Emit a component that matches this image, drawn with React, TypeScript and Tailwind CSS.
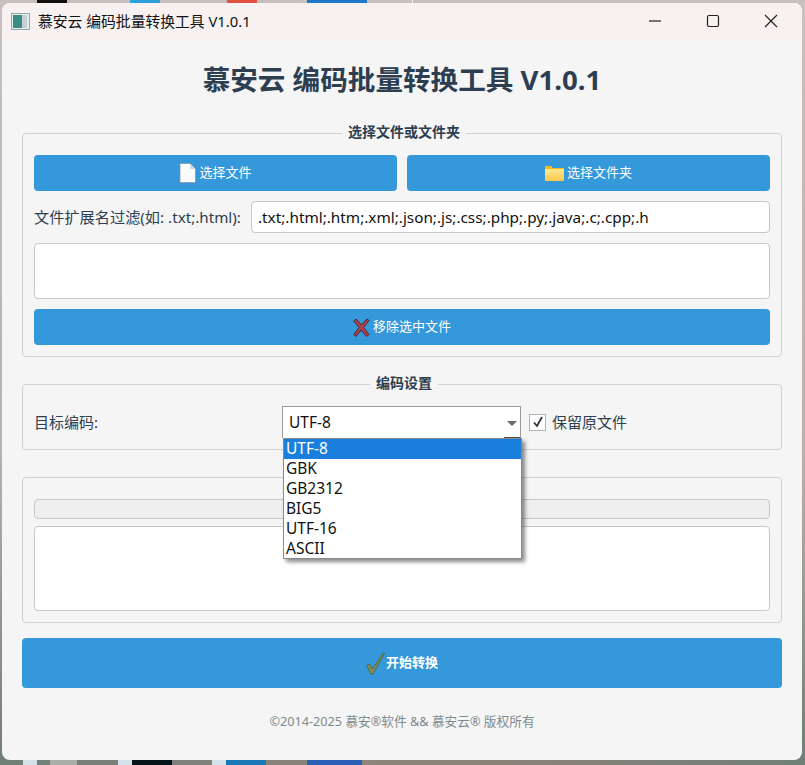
import { ReactNode } from 'react';

const cjk = "font-['Noto_Sans','Noto_Sans_CJK_SC',sans-serif]";

function FileIcon() {
  return (
    <svg width="17" height="20" viewBox="0 0 17 20" className="shrink-0">
      <path d="M1 .5h10l5.500 5.500v13.500H1z" fill="#fbfbfb" stroke="#8a9098" strokeWidth=".7" />
      <path d="M11 .5v5.500h5.500z" fill="#d5d8dc" />
    </svg>
  );
}

function FolderIcon() {
  return (
    <svg width="19" height="15" viewBox="0 0 19 15" className="shrink-0">
      <defs>
        <linearGradient id="folderFill" x1="0" y1="0" x2="0" y2="1">
          <stop offset="0" stopColor="#ffe88f" />
          <stop offset="1" stopColor="#fdc94a" />
        </linearGradient>
      </defs>
      <path d="M0 0h7v2h12v13H0z" fill="#f9b914" />
      <rect x="0" y="3" width="19" height="12" fill="url(#folderFill)" />
    </svg>
  );
}

function CrossIcon() {
  return (
    <svg width="17" height="19" viewBox="0 0 17 19" className="shrink-0">
      <path d="M3 1l5.500 6L14 1l2 1.500-5.500 7L16 16.500 13.500 18.500 8 12 3 18.500.8 16.500 6 9.500.8 3z" fill="#b5404c" stroke="#3c2a30" strokeWidth="1" strokeLinejoin="round" />
    </svg>
  );
}

function CheckIcon() {
  return (
    <svg width="20" height="23" viewBox="0 0 20 23" className="-mr-[3px] shrink-0">
      <path d="M.8 13.500l3-1.500 2.500 5L17.500.8l1.200.4L7 22H4.500z" fill="#7f8b4f" stroke="#4a5a3a" strokeWidth=".7" strokeLinejoin="round" />
    </svg>
  );
}

function Group({ title, className, children }: { title: string; className: string; children?: ReactNode }) {
  return (
    <section className={`relative rounded-[4px] border border-[#d0d0d0] px-[11px] ${className}`}>
      <h2 className="absolute -top-[12px] left-0 right-0 flex justify-center pl-[4px] text-[14px] leading-[20px] font-bold text-[#2c3e50]">
        <span className="bg-[#f5f5f5] px-[6px]">{title}</span>
      </h2>
      {children}
    </section>
  );
}

function BlueButton({ icon, label, className }: { icon: ReactNode; label: string; className: string }) {
  return (
    <button className={`flex items-center justify-center gap-[3px] rounded-[4px] bg-[#3498db] text-[13px] text-white ${className}`}>
      {icon}
      <span>{label}</span>
    </button>
  );
}

const encodings = ['UTF-8', 'GBK', 'GB2312', 'BIG5', 'UTF-16', 'ASCII'];

export default function App() {
  return (
    <div className={`flex h-[765px] w-[805px] flex-col overflow-hidden bg-[linear-gradient(180deg,#c8bfbf_0%,#b8b0ae_60%,#6f7c76_100%)] ${cjk}`}>
      {/* Desktop peeking out above the window */}
      <div className="flex h-[3px] shrink-0">
        <div className="ml-[37px] w-[30px] bg-[#111111]" />
        <div className="ml-[63px] w-[30px] bg-[#2b9fdc]" />
        <div className="ml-[67px] w-[30px] bg-[#e04f3f]" />
        <div className="ml-[50px] w-[60px] bg-[#1f78c8]" />
        <div className="ml-[45px] w-[1px] bg-[#ebebeb]" />
      </div>

      <div className="relative ml-[2px] flex h-[757px] w-[800px] shrink-0 flex-col rounded-[8px] bg-[#f5f5f5]">
        {/* Title bar */}
        <header className="flex h-[37px] shrink-0 items-center rounded-t-[8px] bg-[#f8f1f1] pb-[1px] pl-[9px]">
          <svg width="19" height="17" viewBox="0 0 19 17" className="shrink-0">
            <rect x=".5" y=".5" width="18" height="16" fill="#e8eef0" stroke="#9aa4a8" />
            <rect x="2" y="2" width="9" height="13" fill="#3b8c84" />
            <rect x="11" y="2" width="5" height="13" fill="#c4d0d6" />
          </svg>
          <span className="ml-[8px] text-[14.800px] text-[#111111]">慕安云 编码批量转换工具 V1.0.1</span>
          <div className="mr-[2px] ml-auto flex items-center">
            <svg width="58" height="36" viewBox="0 0 58 36"><path d="M23 18h12" stroke="#222" strokeWidth="1.200" /></svg>
            <svg width="58" height="36" viewBox="0 0 58 36"><rect x="23.500" y="12.500" width="11" height="11" rx="1.500" fill="none" stroke="#222" strokeWidth="1.200" /></svg>
            <svg width="58" height="36" viewBox="0 0 58 36"><path d="M23 12l12 12M35 12 23 24" stroke="#222" strokeWidth="1.200" /></svg>
          </div>
        </header>

        {/* Body */}
        <main className="flex flex-1 flex-col px-[20px]">
          <h1 className="mt-[15px] h-[48px] text-center text-[27.600px] leading-[48px] font-bold text-[#2c3e50]">慕安云 编码批量转换工具 V1.0.1</h1>

          <Group title="选择文件或文件夹" className="mt-[30px] h-[224px] pt-[21px]">
            <div className="flex gap-[10px]">
              <BlueButton icon={<FileIcon />} label="选择文件" className="h-[36px] flex-1" />
              <BlueButton icon={<FolderIcon />} label="选择文件夹" className="h-[36px] flex-1" />
            </div>
            <div className="mt-[10px] flex h-[32px] items-center justify-between">
              <label className="text-[15.200px] text-[#2c3e50]">文件扩展名过滤(如: .txt;.html):</label>
              <div className="flex h-[32px] w-[519px] items-center rounded-[4px] border border-[#c8c8c8] bg-white pl-[6px] text-[15.300px] text-[#111111]">.txt;.html;.htm;.xml;.json;.js;.css;.php;.py;.java;.c;.cpp;.h</div>
            </div>
            <div className="mt-[10px] h-[56px] rounded-[4px] border border-[#c8c8c8] bg-white" />
            <BlueButton icon={<CrossIcon />} label="移除选中文件" className="mt-[10px] h-[36px] w-full" />
          </Group>

          <Group title="编码设置" className="mt-[27px] h-[66px] pt-[21px]">
            <div className="flex items-start">
              <label className="w-[248px] pt-[5px] text-[15px] text-[#2c3e50]">目标编码:</label>
              <div className="relative flex h-[32px] w-[239px] items-center border-t border-r border-l border-[#9a9a9a] bg-white pl-[6px] text-[15.500px] text-[#111111]">
                UTF-8
                <svg width="10" height="5" viewBox="0 0 10 5" className="absolute top-[14px] right-[3px]"><path d="M0 0h10L5 5z" fill="#666c70" /></svg>
                <span className="absolute right-0 bottom-0 h-[1px] w-[16px] bg-[#555555]" />
              </div>
              <div className="ml-[8px] flex h-[32px] items-center">
                <span className="flex h-[17px] w-[17px] items-center justify-center border border-[#b4b4b4] bg-white">
                  <svg width="12" height="12" viewBox="0 0 12 12"><path d="M2 6.500l3 3.500 5-9" fill="none" stroke="#2c3440" strokeWidth="1.800" /></svg>
                </span>
                <span className="ml-[6px] text-[15px] text-[#2c3e50]">保留原文件</span>
              </div>
            </div>
          </Group>

          <Group title="转换进度" className="mt-[27px] h-[146px] pt-[21px]">
            <div className="h-[20px] rounded-[4px] border border-[#c8c8c8] bg-[#efefef]" />
            <div className="mt-[7px] h-[85px] rounded-[4px] border border-[#c8c8c8] bg-white" />
          </Group>

          <BlueButton icon={<CheckIcon />} label="开始转换" className="mt-[15px] h-[50px] w-full font-bold" />

          <footer className="mt-[23px] text-center text-[12.700px] leading-[20px] text-[#7f8c8d]">©2014-2025 慕安®软件 &amp;&amp; 慕安云® 版权所有</footer>
        </main>

        {/* Open combo box list */}
        <ul className="absolute top-[435px] left-[281px] h-[121px] w-[239px] border border-[#8a8a8a] bg-white text-[15.500px] leading-[18px] text-[#111111] shadow-[3px_3px_4px_rgba(0,0,0,0.45)]">
          {encodings.map((name, i) => (
            <li key={name} className={`h-[20px] pl-[2px] ${i === 0 ? 'bg-[#1a7fdc] text-white' : ''}`}>{name}</li>
          ))}
        </ul>
      </div>

      {/* Desktop icons peeking out below the window */}
      <div className="flex h-[5px] shrink-0 bg-[linear-gradient(90deg,#6f7f78_0%,#8e847a_45%,#8a8278_65%,#6f7f78_100%)]">
        <div className="ml-[23px] w-[14px] bg-[#d5e2ea]" />
        <div className="ml-[13px] w-[27px] bg-[#a9aeab]" />
        <div className="ml-[41px] w-[14px] bg-[#d5e2ea]" />
        <div className="w-[40px] bg-[#06141a]" />
        <div className="ml-[40px] w-[14px] bg-[#d5e2ea]" />
        <div className="w-[40px] bg-[#1878b8]" />
        <div className="ml-[41px] w-[55px] bg-[#2b5fb5]" />
      </div>
    </div>
  );
}
